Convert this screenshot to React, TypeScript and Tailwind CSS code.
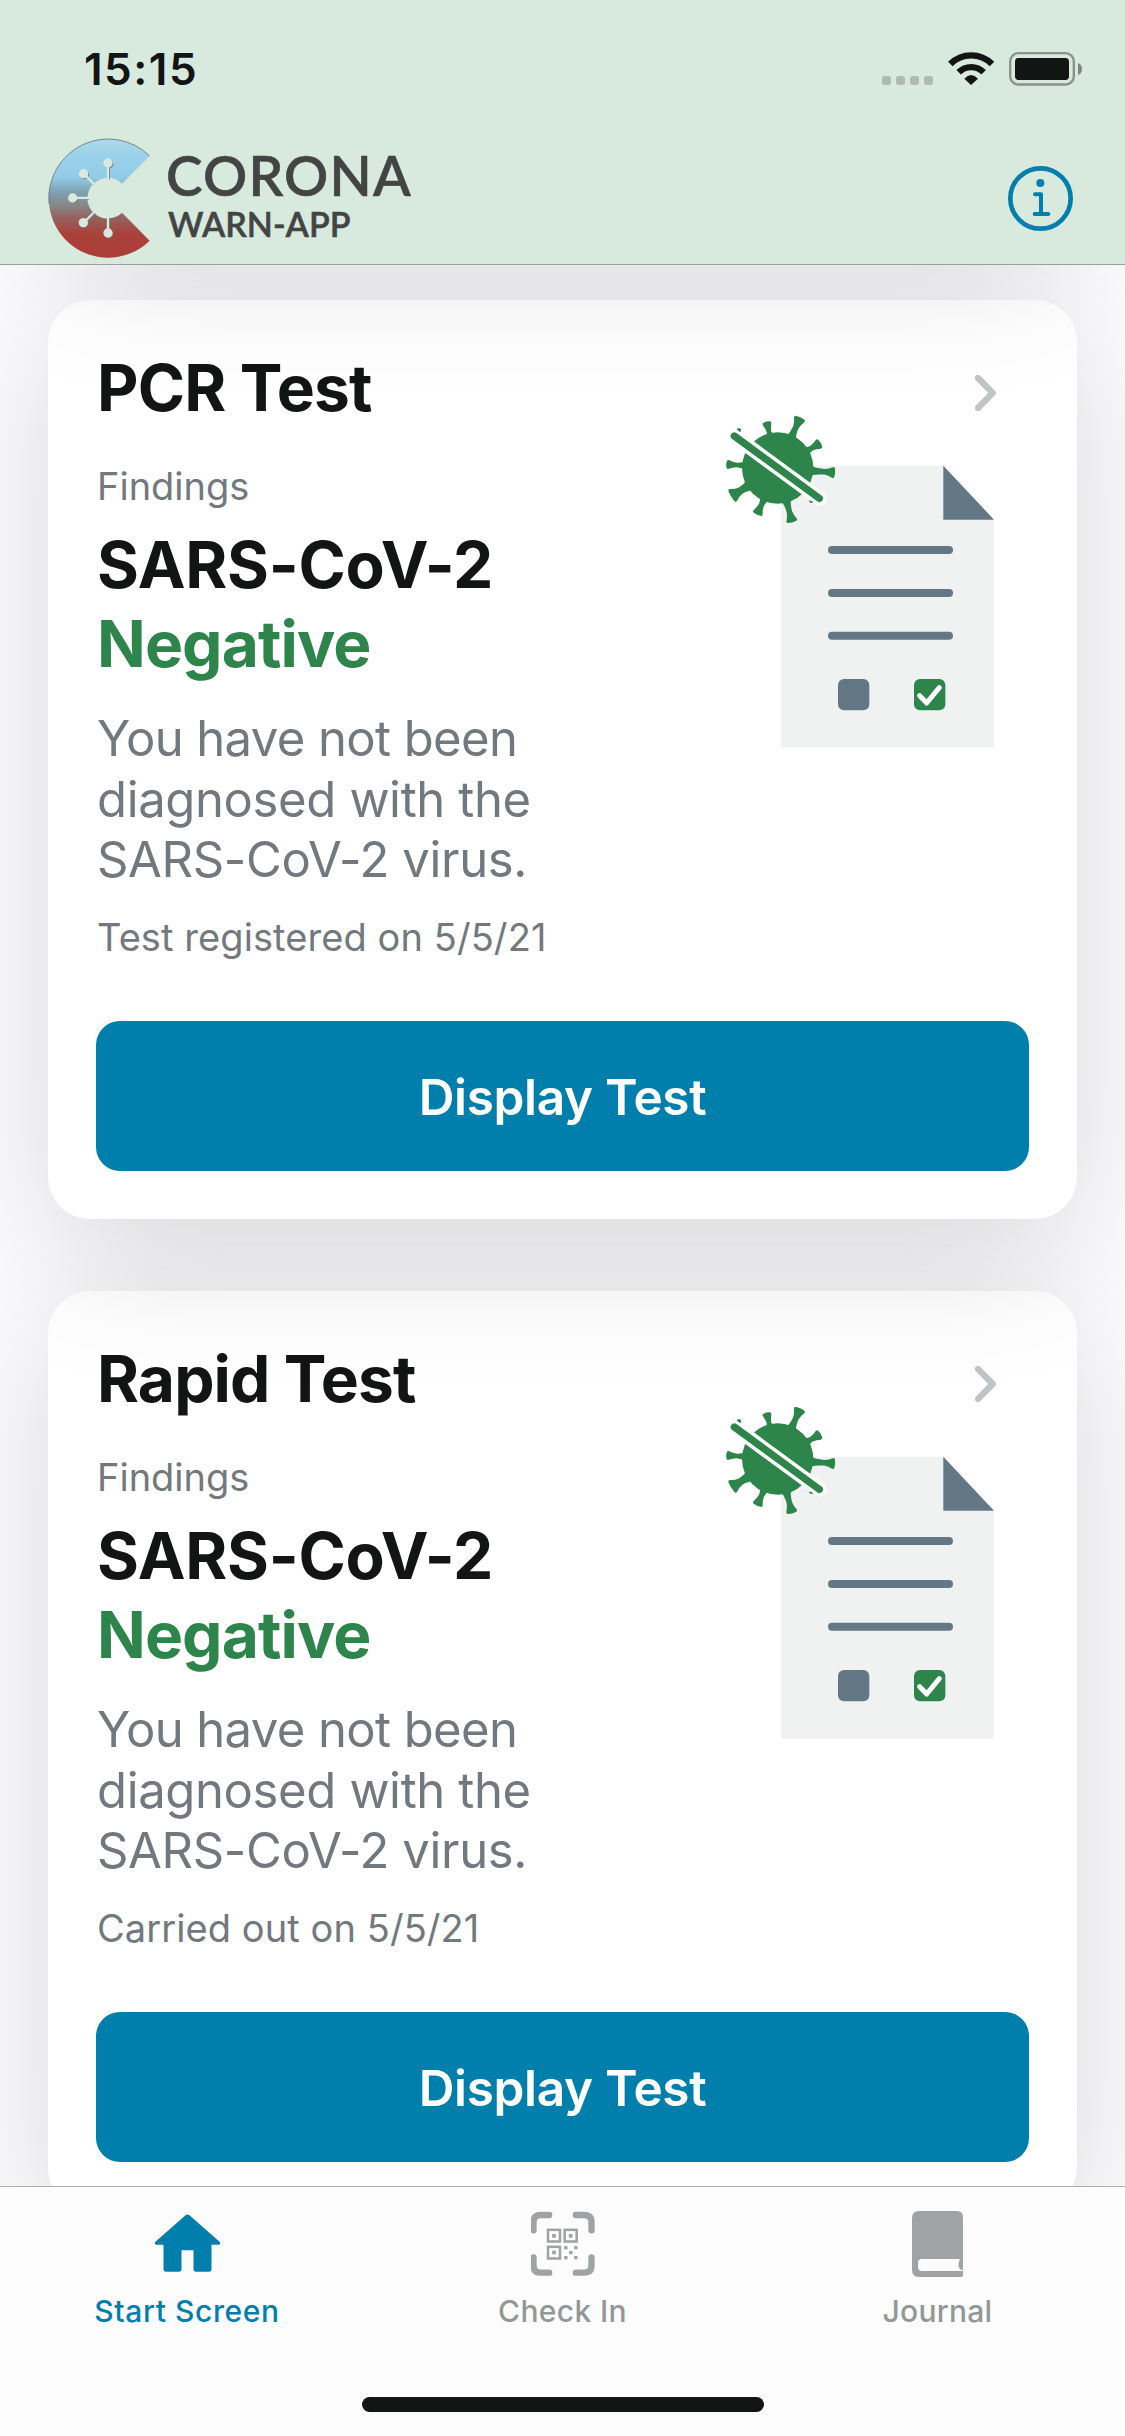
type TestCardProps = {
  title: string;
  titleTracking: string;
  dateText: string;
  className: string;
};

const spikes = [
  { x: -33, y: -137, half: 13 },
  { x: 67, y: -150, half: 17 },
  { x: 127, y: -74, half: 15 },
  { x: 170, y: 14, half: 16 },
  { x: 43, y: 161, half: 16 },
  { x: -61, y: 138, half: 15 },
  { x: -138, y: 84, half: 21 },
  { x: -152, y: -11, half: 13 },
];

function Spike({ x, y, half }: { x: number; y: number; half: number }) {
  const r = Math.hypot(x, y);
  const angle = (Math.atan2(y, x) * 180) / Math.PI;
  const neck = half * 0.52;
  const d = [
    `M96 ${-neck - 9}`,
    `Q108 ${-neck} ${r - 30} ${-neck}`,
    `Q${r - 16} ${-neck - 2} ${r - 6} ${-half}`,
    `Q${r} ${-half - 2} ${r + 1} ${-half + 4}`,
    `Q${r + 4} 0 ${r + 1} ${half - 4}`,
    `Q${r} ${half + 2} ${r - 6} ${half}`,
    `Q${r - 16} ${neck + 2} ${r - 30} ${neck}`,
    `Q108 ${neck} 96 ${neck + 9}Z`,
  ].join("");
  return <path d={d} transform={`translate(233 324) rotate(${angle})`} />;
}

function TestResultIllustration() {
  return (
    <svg className="h-[333px] w-[268px] shrink-0" viewBox="78 165 804 999" fill="none">
      <path d="M243 317H730L882 479V1163H243Z" fill="#f0f2f2" />
      <path d="M730 317L882 479H730Z" fill="#647784" />
      <g fill="#647784">
        <rect x="384" y="558" width="375" height="24" rx="12" />
        <rect x="384" y="687" width="375" height="24" rx="12" />
        <rect x="384" y="815" width="375" height="24" rx="12" />
        <rect x="414" y="957" width="94" height="94" rx="18" />
      </g>
      <rect x="642" y="957" width="94" height="94" rx="18" fill="#2e854b" />
      <path d="M659 1007L680 1029L718 983" stroke="#fff" strokeWidth="15" strokeLinecap="round" strokeLinejoin="round" />
      <g fill="#2e854b">
        <circle cx="233" cy="324" r="107" />
        {spikes.map((s) => (
          <Spike key={`${s.x},${s.y}`} {...s} />
        ))}
        <path d="M108 209Q118 203 123 208L121 217Z" />
        <path d="M326 423L338 425Q336 430 331 428Z" />
      </g>
      <path d="M103 228L358 415" stroke="#fff" strokeWidth="43" strokeLinecap="round" />
      <path d="M103 228L358 415" stroke="#2e854b" strokeWidth="22" strokeLinecap="round" />
      <g fill="#2e854b">
        <path d="M110 208Q118 202 123 208L121 217Z" />
        <path d="M327 421L339 425Q336 430 332 428Z" />
      </g>
    </svg>
  );
}

function TestCard({ title, titleTracking, dateText, className }: TestCardProps) {
  return (
    <section
      className={`relative flex h-[919px] shrink-0 flex-col rounded-[42px] bg-white px-12 pt-[49px] shadow-[0_30px_144px_rgba(0,0,0,0.15)] ${className}`}
    >
      <div className="flex h-[77px] justify-between pr-[33px] pl-px">
        <h2 className={`text-[64px] leading-[77px] font-bold text-[#131514] ${titleTracking}`}>{title}</h2>
        <svg className="mt-[26px] h-9 w-[21px]" viewBox="0 0 63 108" fill="none">
          <path d="M9 9L53 54L9 99" stroke="#c0c4c4" strokeWidth="19" strokeLinecap="round" strokeLinejoin="round" />
        </svg>
      </div>
      <div className="-mt-[11px] flex items-start justify-between pr-[35px] pl-px">
        <div className="pt-[47px]">
          <p className="text-[38px] leading-[48px] text-[#72787d]">Findings</p>
          <p className="mt-[15px] text-[64px] leading-[80px] font-bold tracking-[-0.22px] text-[#131514]">SARS-CoV-2</p>
          <p className="text-[64px] leading-[78px] font-bold tracking-[-0.9px] text-[#2e854b]">Negative</p>
          <p className="mt-[26px] text-[49px] leading-[60.5px] tracking-[-0.36px] text-[#72787d]">
            <span className="tracking-[-0.6px]">You have not been</span>
            <br />
            diagnosed with the
            <br />
            SARS-CoV-2 virus.
          </p>
          <p className="mt-[22.5px] text-[38px] leading-[48px] tracking-[0.08px] text-[#72787d]">{dateText}</p>
        </div>
        <TestResultIllustration />
      </div>
      <button className="mt-auto mb-12 h-[150px] w-full shrink-0 rounded-[24px] bg-[#007fad] pt-px text-[49.5px] leading-[60px] font-semibold tracking-[-0.33px] text-white">
        Display Test
      </button>
    </section>
  );
}

function Logo() {
  return (
    <svg className="h-[121px] w-[103px]" viewBox="54 53 309 363" fill="none">
      <defs>
        <linearGradient id="logo" x1="0" y1="55" x2="0" y2="413" gradientUnits="userSpaceOnUse">
          <stop offset="0" stopColor="#b0d9e8" />
          <stop offset="0.14" stopColor="#9bd1eb" />
          <stop offset="0.32" stopColor="#93cce8" />
          <stop offset="0.46" stopColor="#7d9ead" />
          <stop offset="0.56" stopColor="#878787" />
          <stop offset="0.66" stopColor="#94635f" />
          <stop offset="0.8" stopColor="#ab403a" />
        </linearGradient>
      </defs>
      <path d="M359 107A178 178 0 1 0 359 361L276 277A61 61 0 1 1 276 190Z" fill="url(#logo)" />
      <path d="M359 107A178 178 0 0 0 57 250" stroke="#6d7678" strokeWidth="2.5" />
      <g fill="#6f7777" stroke="#6f7777" strokeWidth="6" transform="translate(3 3)">
        <path d="M234 177V130M193 192L163 162M177 233H130M192 276L162 306M234 290V338" />
        <circle cx="234" cy="128" r="10" />
        <circle cx="161" cy="160" r="10" />
        <circle cx="128" cy="233" r="10" />
        <circle cx="160" cy="307" r="10" />
        <circle cx="234" cy="338" r="10" />
      </g>
      <g fill="#d8e9dd" stroke="#d8e9dd" strokeWidth="7">
        <circle cx="234" cy="234" r="54" />
        <path d="M234 180V130M196 195L163 162M180 233H130M196 272L162 306M234 288V338" />
        <circle cx="234" cy="128" r="10.5" />
        <circle cx="161" cy="160" r="10.5" />
        <circle cx="128" cy="233" r="10.5" />
        <circle cx="160" cy="307" r="10.5" />
        <circle cx="234" cy="338" r="10.5" />
      </g>
    </svg>
  );
}

function StatusIcons() {
  return (
    <svg className="mt-[3px] h-[34px] w-[200px]" viewBox="66 66 600 102" fill="none">
      <g fill="#b0b9b4">
        <rect x="66" y="138" width="27" height="27" rx="8" />
        <rect x="108" y="138" width="27" height="27" rx="8" />
        <rect x="150" y="138" width="27" height="27" rx="8" />
        <rect x="192" y="138" width="27" height="27" rx="8" />
      </g>
      <g stroke="#131514" strokeWidth="19">
        <path d="M271 102A88 88 0 0 1 396 102" />
        <path d="M296 127A53 53 0 0 1 371 127" />
      </g>
      <path d="M313 146Q333 124 354 146L333 165Z" fill="#131514" />
      <rect x="450.500" y="69.500" width="191" height="94" rx="25" stroke="#8b918e" strokeWidth="7" />
      <rect x="465" y="84" width="162" height="66" rx="11" fill="#131514" />
      <path d="M654 99Q666 104 666 117T654 135Z" fill="#7f8583" />
    </svg>
  );
}

function InfoIcon() {
  return (
    <svg className="mt-7 h-[65px] w-[65px]" viewBox="0 0 195 195" fill="none">
      <circle cx="97.500" cy="97.500" r="90.500" stroke="#007fad" strokeWidth="14" />
      <circle cx="97" cy="51" r="12" fill="#007fad" />
      <path d="M81 85H99V144M80 144H121" stroke="#007fad" strokeWidth="12" strokeLinecap="round" strokeLinejoin="round" />
    </svg>
  );
}

function HomeIcon() {
  return (
    <svg className="h-[66px] w-[66px]" viewBox="223.500 94 198 198" fill="#007fad">
      <path d="M315 107Q321 102 327 107L418 187Q422 194 414 195H393V268Q393 276 385 276H347Q339 276 339 268V212H303V268Q303 276 295 276H257Q249 276 249 268V195H228Q220 194 224 187Z" />
    </svg>
  );
}

function QrIcon() {
  return (
    <svg className="h-[66px] w-16" viewBox="151.500 63 192 198" fill="none">
      <path
        d="M159 121V97Q159 75 181 75H206M286 75H311Q333 75 333 97V121M333 202V226Q333 248 311 248H286M206 248H181Q159 248 159 226V202"
        stroke="#9fa3a3"
        strokeWidth="19"
        strokeLinecap="round"
      />
      <g stroke="#9fa3a3" strokeWidth="7.5">
        <rect x="202.500" y="119.500" width="36" height="35" />
        <rect x="252.500" y="119.500" width="36" height="35" />
        <rect x="202.500" y="170.500" width="36" height="35" />
      </g>
      <g fill="#9fa3a3">
        <rect x="215" y="132" width="11" height="11" />
        <rect x="265" y="132" width="11" height="11" />
        <rect x="215" y="182" width="11" height="11" />
        <rect x="251" y="168" width="10" height="10" />
        <rect x="281" y="168" width="10" height="10" />
        <rect x="266" y="183" width="10" height="10" />
        <rect x="251" y="198" width="10" height="10" />
        <rect x="281" y="198" width="10" height="10" />
      </g>
    </svg>
  );
}

function JournalIcon() {
  return (
    <svg className="h-[66px] w-[51px]" viewBox="156 63 153 198" fill="#9fa3a3">
      <path
        fillRule="evenodd"
        d="M178 63H290Q309 63 309 82V239H301Q290 226 300 207H186Q174 207 174 219V231Q174 243 186 243H309V255Q309 261 303 261H178Q156 261 156 239V85Q156 63 178 63Z"
      />
    </svg>
  );
}

export default function App() {
  return (
    <div className="flex h-[2436px] w-[1125px] flex-col overflow-hidden bg-[#fdfdff] font-['Inter',sans-serif]">
      <header className="h-[265px] shrink-0 border-b border-[#9aa09e] bg-[#d8e9dd] pt-[49px]">
        <div className="flex h-10 justify-between pr-[43px] pl-[84px]">
          <span className="text-[44px] leading-10 font-semibold tracking-[1.5px] text-[#131514]">15:15</span>
          <StatusIcons />
        </div>
        <div className="mt-12 flex h-[122px] justify-between pt-px pr-[52px] pl-12">
          <div className="flex">
            <Logo />
            <div className="ml-[15px] pt-[13px] font-['Lato',sans-serif] font-semibold text-[#434544] [-webkit-text-stroke:0.5px_#434544]">
              <p className="text-[55px] leading-[48px] tracking-[1.2px]">CORONA</p>
              <p className="mt-[5px] pl-0.5 text-[34px] leading-10">WARN-APP</p>
            </div>
          </div>
          <InfoIcon />
        </div>
      </header>

      <main className="min-h-0 flex-1 overflow-hidden px-12">
        <div className="-mt-[636px] flex flex-col gap-[71px]">
          <div className="relative z-30 h-[600px] shrink-0 rounded-[42px] bg-white shadow-[0_30px_144px_rgba(0,0,0,0.15)]" />
          <div className="flex flex-col gap-[72px]">
            <TestCard
              title="PCR Test"
              titleTracking="tracking-[-0.8px]"
              dateText="Test registered on 5/5/21"
              className="z-20"
            />
            <TestCard
              title="Rapid Test"
              titleTracking="tracking-[-0.87px]"
              dateText="Carried out on 5/5/21"
              className="z-10"
            />
          </div>
        </div>
      </main>

      <nav className="relative z-40 flex h-[250px] shrink-0 flex-col border-t border-[#a9b0ae] bg-[#fcfcfc] pt-6">
        <div className="grid grid-cols-3 justify-items-center text-[30px] leading-9 font-medium">
          <div className="flex flex-col items-center gap-4 tracking-[0.6px] text-[#007fad]">
            <HomeIcon />
            <span className="-ml-px">Start Screen</span>
          </div>
          <div className="flex flex-col items-center gap-4 tracking-[0.35px] text-[#929797]">
            <QrIcon />
            <span>Check In</span>
          </div>
          <div className="flex flex-col items-center gap-4 tracking-[0.25px] text-[#929797]">
            <JournalIcon />
            <span>Journal</span>
          </div>
        </div>
        <div className="mx-auto mt-auto mb-6 h-[15px] w-[402px] rounded-full bg-[#131514]" />
      </nav>
    </div>
  );
}
